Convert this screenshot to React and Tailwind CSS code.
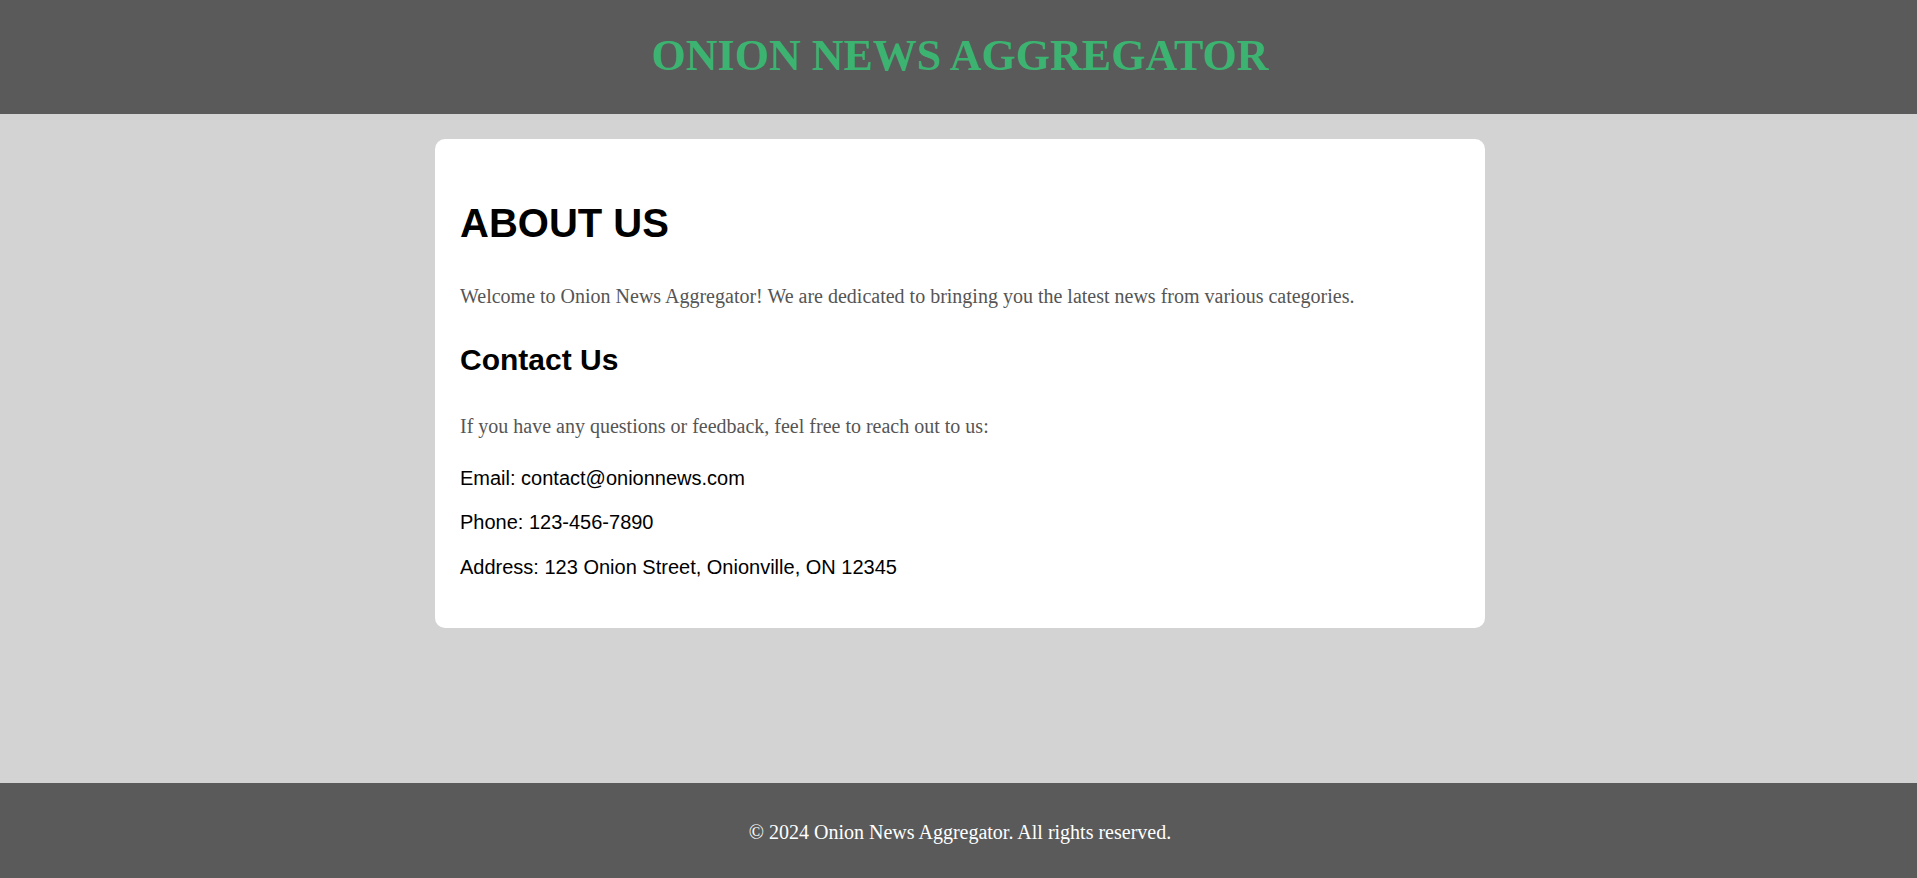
export default function App() {
  return (
    <div className="min-h-screen flex flex-col bg-[#d3d3d3]">
      <header className="bg-[#5a5a5a] pt-[34px] pb-[36px] pl-[3px] text-center">
        <h1 className="m-0 text-[44px] leading-[44px] font-bold text-[#3cb371] font-['Liberation_Serif','Times_New_Roman',serif]">
          ONION NEWS AGGREGATOR
        </h1>
      </header>
      <main className="flex-1 pl-[3px] pt-[25px]">
        <div className="mx-auto w-[1050px] bg-white rounded-[10px] px-[25px] pt-[25px] pb-[51px] font-['Liberation_Sans',Arial,sans-serif]">
          <h2 className="mt-[39px] text-[40px] leading-[40px] font-bold text-black">
            ABOUT US
          </h2>
          <p className="mt-[43px] text-[20px] leading-[20px] text-[#555555] font-['Liberation_Serif','Times_New_Roman',serif]">
            Welcome to Onion News Aggregator! We are dedicated to bringing you the latest news from various categories.
          </p>
          <h3 className="mt-[39px] text-[30px] leading-[30px] font-bold text-black">
            Contact Us
          </h3>
          <p className="mt-[41px] text-[20px] leading-[20px] text-[#555555] font-['Liberation_Serif','Times_New_Roman',serif]">
            If you have any questions or feedback, feel free to reach out to us:
          </p>
          <p className="mt-[32px] text-[20px] leading-[20px] text-black">
            Email: contact@onionnews.com
          </p>
          <p className="mt-[24px] text-[20px] leading-[20px] text-black">
            Phone: 123-456-7890
          </p>
          <p className="mt-[25px] text-[20px] leading-[20px] text-black">
            Address: 123 Onion Street, Onionville, ON 12345
          </p>
        </div>
      </main>
      <footer className="bg-[#5a5a5a] h-[95px] pt-[39px] pl-[3px] text-center">
        <p className="text-[20px] leading-[20px] text-white font-['Liberation_Serif','Times_New_Roman',serif]">
          © 2024 Onion News Aggregator. All rights reserved.
        </p>
      </footer>
    </div>
  );
}
